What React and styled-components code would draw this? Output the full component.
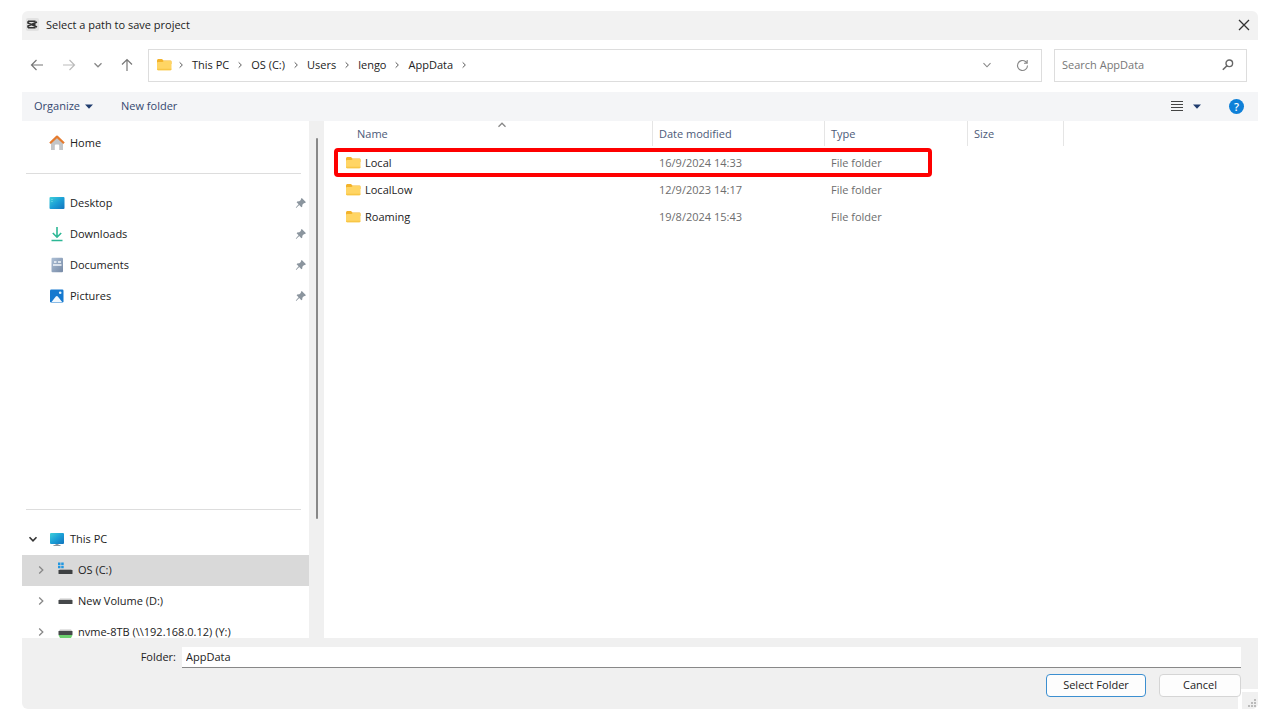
import styled, { createGlobalStyle } from "styled-components";

const places = [
  { name: "Desktop", icon: "desktop" },
  { name: "Downloads", icon: "downloads" },
  { name: "Documents", icon: "documents" },
  { name: "Pictures", icon: "pictures" },
];

const drives = [
  { name: "OS (C:)", icon: "system", selected: true },
  { name: "New Volume (D:)", icon: "drive" },
  { name: "nvme-8TB (\\\\192.168.0.12) (Y:)", icon: "network" },
];

const path = ["This PC", "OS (C:)", "Users", "lengo", "AppData"];

const folders = [
  { name: "Local", date: "16/9/2024 14:33", marked: true },
  { name: "LocalLow", date: "12/9/2023 14:17" },
  { name: "Roaming", date: "19/8/2024 15:43" },
];

const FolderIcon = () => (
  <svg width="15" height="14" viewBox="0 0 15 14">
    <path d="M0 2.5Q0 1 1.200 1H5L6.500 2.600H13.500Q14.500 2.600 14.500 3.800V6H0Z" fill="#f3b32b" />
    <path d="M0 5Q0 4 1 4H5.500L6.800 3H13.500Q14.500 3 14.500 4V11Q14.500 12.200 13.500 12.200H1Q0 12.200 0 11Z" fill="#ffd564" />
    <path d="M0 10.800H14.500Q14.500 12.200 13.500 12.200H1Q0 12.200 0 10.800Z" fill="#f8c646" />
  </svg>
);

const Chevron = ({ size = 6, color = "#555", turn = 0, weight = 1.3 }) => (
  <svg width={size} height={size} viewBox="0 0 8 8" overflow="visible">
    <path
      d="M2.200 0.500L5.800 4L2.200 7.500"
      transform={`rotate(${turn} 4 4)`}
      fill="none"
      stroke={color}
      strokeWidth={weight}
    />
  </svg>
);

const Arrow = ({ turn = 0, color = "#777" }) => (
  <svg width="14" height="14" viewBox="0 0 14 14">
    <path
      d="M13 7H1.500M6.500 2L1.500 7L6.500 12"
      transform={`rotate(${turn} 7 7)`}
      fill="none"
      stroke={color}
      strokeWidth="1.200"
    />
  </svg>
);

const Triangle = () => (
  <svg width="8" height="5" viewBox="0 0 8 5">
    <path d="M0 0.500H8L4 4.800Z" fill="#1f3c6e" />
  </svg>
);

const Pin = () => (
  <svg width="12" height="12" viewBox="0 0 12 12">
    <path
      d="M6.800 1L11 5.200L9.800 6L8.800 6.200L7.400 7.700L7.200 9.800L6.400 10.200L4.200 8L1.200 10.900L0.800 10.600L3.600 7.300L1.600 5.200L2.200 4.500L4.300 4.300L5.800 3L6 1.800Z"
      fill="#8b959e"
    />
  </svg>
);

const icons = {
  home: (
    <>
      <path d="M2 7L8 2.500L14 7V15H10.200V10.500Q10.200 9.500 9.200 9.500H6.800Q5.800 9.500 5.800 10.500V15H2Z" fill="#c3c5c8" />
      <path d="M1 8.200L8 1.600L15 8.200" fill="none" stroke="#e57b2e" strokeWidth="2.200" strokeLinejoin="round" />
    </>
  ),
  desktop: (
    <>
      <defs>
        <linearGradient id="desk" x1="0" y1="0" x2="1" y2="1">
          <stop offset="0" stopColor="#3fd0da" />
          <stop offset="0.5" stopColor="#1b9fd6" />
          <stop offset="1" stopColor="#1173bd" />
        </linearGradient>
      </defs>
      <rect x="0.500" y="2" width="15" height="12" rx="1" fill="url(#desk)" />
      <path d="M2.500 4.500H3.500M2.500 6.500H3.500" stroke="#7fe3ea" />
    </>
  ),
  downloads: (
    <path d="M8 1V11M3.800 7L8 11.200L12.200 7M2.500 14.500H13.500" fill="none" stroke="#2cb795" strokeWidth="1.600" />
  ),
  documents: (
    <>
      <defs>
        <linearGradient id="doc" x1="0" y1="0" x2="1" y2="1">
          <stop offset="0" stopColor="#adc0d6" />
          <stop offset="1" stopColor="#7689a5" />
        </linearGradient>
      </defs>
      <rect x="2.500" y="0.800" width="11.500" height="14.500" rx="1" fill="url(#doc)" />
      <path d="M5 5H7.500M9 5H12M4 8H12.500" stroke="#f4f8fc" strokeWidth="1.400" />
    </>
  ),
  pictures: (
    <>
      <rect x="1" y="1.500" width="13.500" height="13" rx="1.200" fill="#1579cf" />
      <path d="M2.500 14L6.800 8.500Q7.800 7.500 8.800 8.500L13.200 14Z" fill="#f1f8fe" />
      <circle cx="11.200" cy="4.800" r="1.300" fill="#e5f3fd" />
    </>
  ),
  pc: (
    <>
      <rect x="1" y="2" width="14" height="11" rx="1" fill="url(#desk)" />
      <path d="M6.500 13H9.500V14H11.500V15H4.500V14H6.500Z" fill="#8d98a1" />
    </>
  ),
  system: (
    <>
      <path d="M1 0.500H3.500V3H1ZM4.200 0.500H6.700V3H4.200ZM1 3.700H3.500V6.200H1ZM4.200 3.700H6.700V6.200H4.200Z" fill="#2397e0" />
      <path d="M3 7H14L15.500 8.500H1.500Z" fill="#aaa" />
      <rect x="1.500" y="8" width="14" height="4" rx="0.600" fill="#3d4042" />
    </>
  ),
  drive: (
    <>
      <path d="M3 5.500H14L15.500 7.500H1.500Z" fill="#c9c9c9" />
      <rect x="1.500" y="7" width="14" height="4" rx="0.600" fill="#45484a" />
    </>
  ),
  network: (
    <>
      <path d="M3 5.500H14L15.500 7.500H1.500Z" fill="#c9c9c9" />
      <rect x="1.500" y="7" width="14" height="4" rx="0.600" fill="#45484a" />
      <path d="M1.500 11H15.500L14 14H3Z" fill="#6cd06f" />
    </>
  ),
};

const ItemIcon = ({ name }) => (
  <svg width="16" height="16" viewBox="0 0 16 16">
    {icons[name]}
  </svg>
);

const App = () => {
  return (
    <>
      <GlobalStyle />
      <Dialog>
        <TitleBar>
          <svg width="13" height="13" viewBox="0 0 13 13">
            <rect width="13" height="13" rx="2" fill="#e2e2e2" />
            <path
              d="M2 3.300H9.500M2 9.700H9.500M2 3.300V5L11 9M2 9.700V8L11 4M4 6.500H9.500"
              fill="none"
              stroke="#333"
              strokeWidth="1.600"
            />
          </svg>
          <Title>Select a path to save project</Title>
          <IconButton aria-label="Close">
            <svg width="12" height="12" viewBox="0 0 12 12">
              <path d="M1 1L11 11M11 1L1 11" stroke="#333" strokeWidth="1.300" />
            </svg>
          </IconButton>
        </TitleBar>

        <NavBar>
          <NavButtons>
            <IconButton aria-label="Back">
              <Arrow />
            </IconButton>
            <IconButton aria-label="Forward">
              <Arrow turn={180} color="#bbb" />
            </IconButton>
            <IconButton aria-label="Recent locations">
              <Chevron size={8} turn={90} color="#888" />
            </IconButton>
            <IconButton aria-label="Up">
              <Arrow turn={90} />
            </IconButton>
          </NavButtons>
          <AddressBar>
            <PathRoot>
              <FolderIcon />
              <Chevron />
            </PathRoot>
            {path.map((part) => (
              <Crumb key={part}>
                <CrumbButton>{part}</CrumbButton>
                <Chevron />
              </Crumb>
            ))}
            <AddressTools>
              <IconButton aria-label="Previous locations">
                <Chevron size={8} turn={90} color="#888" weight={1.1} />
              </IconButton>
              <IconButton aria-label="Refresh">
                <svg width="13" height="13" viewBox="0 0 13 13">
                  <path
                    d="M11.500 6.500A5 5 0 1 1 9.500 2.500L11 4M11.200 1V4.200H8"
                    fill="none"
                    stroke="#888"
                    strokeWidth="1.100"
                  />
                </svg>
              </IconButton>
            </AddressTools>
          </AddressBar>
          <SearchBox>
            <SearchInput aria-label="Search AppData" placeholder="Search AppData" />
            <svg width="12" height="12" viewBox="0 0 12 12">
              <circle cx="7.300" cy="4.300" r="3.300" fill="none" stroke="#666" strokeWidth="1.400" />
              <path d="M5 6.700L0.800 10.800" stroke="#666" strokeWidth="1.600" />
            </svg>
          </SearchBox>
        </NavBar>

        <Toolbar>
          <ToolButton>
            Organize <Triangle />
          </ToolButton>
          <ToolButton>New folder</ToolButton>
          <ViewTools>
            <IconButton aria-label="View">
              <svg width="12" height="12" viewBox="0 0 12 12">
                <path d="M0 1.500H12M0 4.500H12M0 7.500H12M0 10.500H12" stroke="#444" strokeWidth="1.200" />
              </svg>
            </IconButton>
            <IconButton aria-label="More views">
              <Triangle />
            </IconButton>
            <HelpButton aria-label="Help">?</HelpButton>
          </ViewTools>
        </Toolbar>

        <Body>
          <Sidebar>
            <SideItem>
              <ItemIcon name="home" />
              Home
            </SideItem>
            <Divider />
            {places.map((place) => (
              <SideItem key={place.name}>
                <ItemIcon name={place.icon} />
                <SideLabel>{place.name}</SideLabel>
                <Pin />
              </SideItem>
            ))}
            <Tree>
              <Divider />
              <TreeItem>
                <Chevron size={8} turn={90} color="#333" weight={1.6} />
                <ItemIcon name="pc" />
                This PC
              </TreeItem>
              {drives.map((drive) => (
                <TreeItem key={drive.name} $nested $selected={drive.selected}>
                  <Chevron size={8} color="#888" />
                  <ItemIcon name={drive.icon} />
                  {drive.name}
                </TreeItem>
              ))}
            </Tree>
          </Sidebar>
          <ScrollTrack>
            <ScrollThumb />
          </ScrollTrack>
          <FileList>
            <Table>
              <thead>
                <tr>
                  <HeadCell $width={329} $first>
                    Name
                    <SortMark>
                      <Chevron size={8} turn={-90} color="#888" />
                    </SortMark>
                  </HeadCell>
                  <HeadCell $width={172}>Date modified</HeadCell>
                  <HeadCell $width={143}>Type</HeadCell>
                  <HeadCell $width={96}>Size</HeadCell>
                </tr>
              </thead>
              <tbody>
                {folders.map((folder) => (
                  <Row key={folder.name} $marked={folder.marked}>
                    <Cell>
                      <FileName>
                        <FolderIcon />
                        {folder.name}
                      </FileName>
                    </Cell>
                    <Cell>{folder.date}</Cell>
                    <Cell>File folder</Cell>
                    <Cell />
                  </Row>
                ))}
              </tbody>
            </Table>
          </FileList>
        </Body>

        <Footer>
          <Field>
            <FieldLabel htmlFor="folder">Folder:</FieldLabel>
            <FieldInput id="folder" defaultValue="AppData" />
          </Field>
          <Actions>
            <ActionButton $primary>Select Folder</ActionButton>
            <ActionButton>Cancel</ActionButton>
          </Actions>
          <Grip>
            <svg width="9" height="9" viewBox="0 0 9 9">
              <path d="M6 0H8V2H6ZM6 3H8V5H6ZM6 6H8V8H6ZM3 3H5V5H3ZM3 6H5V8H3ZM0 6H2V8H0Z" fill="#bbb" />
            </svg>
          </Grip>
        </Footer>
      </Dialog>
    </>
  );
};

const GlobalStyle = createGlobalStyle`
  *,
  *::after {
    box-sizing: border-box;
  }

  body {
    margin: 0;
    background: #fff;
    color: #222;
    font-family: "Open Sans", "Noto Sans", sans-serif;
    font-size: 11px;
    line-height: 16px;
  }

  button,
  input {
    font: inherit;
    color: inherit;
  }

  svg {
    display: block;
    flex-shrink: 0;
  }
`;

const Dialog = styled.main`
  display: flex;
  flex-direction: column;
  height: calc(100vh - 22px);
  margin: 11px 22px;
  border-radius: 6px;
  overflow: hidden;
`;

const TitleBar = styled.header`
  display: flex;
  align-items: center;
  gap: 7px;
  height: 29px;
  padding: 0 8px 2px 4px;
  background: #f2f2f2;
`;

const Title = styled.h1`
  flex: 1;
  margin: 0;
  font-size: 11px;
  font-weight: 400;
`;

const IconButton = styled.button`
  display: flex;
  padding: 0;
  border: none;
  background: none;
`;

const NavBar = styled.div`
  display: flex;
  align-items: center;
  height: 52px;
  padding: 0 11px 2px 8px;
`;

const NavButtons = styled.div`
  display: flex;
  align-items: center;
  justify-content: space-between;
  width: 104px;
  margin-right: 14px;
`;

const AddressBar = styled.nav`
  display: flex;
  align-items: center;
  flex: 1;
  gap: 8px;
  height: 33px;
  padding: 0 12px 0 8px;
  border: 1px solid #ddd;
`;

const PathRoot = styled.div`
  display: flex;
  align-items: center;
  gap: 6px;
`;

const Crumb = styled.div`
  display: flex;
  align-items: center;
  gap: 8px;
`;

const CrumbButton = styled.button`
  padding: 0;
  border: none;
  background: none;
`;

const AddressTools = styled.div`
  display: flex;
  align-items: center;
  gap: 25px;
  margin-left: auto;
`;

const SearchBox = styled.div`
  display: flex;
  align-items: center;
  width: 193px;
  height: 33px;
  margin-left: 12px;
  padding: 0 12px 0 7px;
  border: 1px solid #ddd;
`;

const SearchInput = styled.input`
  flex: 1;
  min-width: 0;
  padding: 0;
  border: none;
  outline: none;

  &::placeholder {
    color: #777;
    opacity: 1;
  }
`;

const Toolbar = styled.div`
  display: flex;
  align-items: center;
  gap: 28px;
  height: 29px;
  padding: 0 14px 1px 12px;
  background: #f4f5f7;
`;

const ToolButton = styled.button`
  display: flex;
  align-items: center;
  gap: 5px;
  padding: 0;
  border: none;
  background: none;
  color: #35486f;
`;

const ViewTools = styled.div`
  display: flex;
  align-items: center;
  gap: 10px;
  margin-left: auto;
`;

const HelpButton = styled.button`
  width: 15px;
  height: 15px;
  margin-left: 18px;
  padding: 0;
  border: none;
  border-radius: 50%;
  background: #0f80d8;
  color: #fff;
  font-weight: 600;
  line-height: 15px;
`;

const Body = styled.div`
  display: flex;
  flex: 1;
  min-height: 0;
`;

const Sidebar = styled.aside`
  width: 287px;
  padding-top: 7px;
  overflow: hidden;
`;

const SideItem = styled.div`
  display: flex;
  align-items: center;
  gap: 5px;
  height: 31px;
  padding: 0 2px 2px 27px;
  background: ${(props) => (props.$selected ? "#d9d9d9" : "none")};
`;

const TreeItem = styled(SideItem)`
  padding-left: ${(props) => (props.$nested ? 15 : 7)}px;

  svg:first-child {
    margin-right: 7px;
  }
`;

const SideLabel = styled.span`
  flex: 1;
`;

const Divider = styled.hr`
  height: 1px;
  margin: 14px 8px 14px 4px;
  border: none;
  background: #ddd;
`;

const Tree = styled.div`
  padding-top: 183px;
`;

const ScrollTrack = styled.div`
  display: flex;
  justify-content: center;
  width: 15px;
  padding: 17px 0 119px;
  background: #f0f0f0;
`;

const ScrollThumb = styled.div`
  width: 2px;
  border-radius: 1px;
  background: #888;
`;

const FileList = styled.section`
  flex: 1;
  min-width: 0;
`;

const Table = styled.table`
  border-collapse: separate;
  border-spacing: 0;
  table-layout: fixed;
  width: 740px;

  thead::after {
    content: "";
    display: block;
    height: 3px;
  }
`;

const HeadCell = styled.th`
  position: relative;
  width: ${(props) => props.$width}px;
  height: 25px;
  padding: 0 0 0 ${(props) => (props.$first ? 33 : 6)}px;
  border-right: 1px solid #e5e5e5;
  color: #4c5a78;
  font-weight: 400;
  text-align: left;
`;

const SortMark = styled.span`
  position: absolute;
  top: 0;
  left: 174px;
`;

const Row = styled.tr`
  position: relative;

  ${(props) =>
    props.$marked &&
    `
    &::after {
      content: "";
      position: absolute;
      top: -1px;
      bottom: -1px;
      left: 10px;
      width: 598px;
      border: 4px solid #fe0000;
      border-radius: 4px;
    }
  `}
`;

const Cell = styled.td`
  height: 27px;
  padding: 0 0 0 6px;
  color: #6d6d6d;

  &:first-child {
    padding-left: 22px;
    color: #222;
  }
`;

const FileName = styled.div`
  display: flex;
  align-items: center;
  gap: 4px;
`;

const Footer = styled.footer`
  position: relative;
  height: 71px;
  padding: 9px 17px 0 0;
  background: #f0f0f0;
`;

const Field = styled.div`
  display: flex;
  align-items: center;
`;

const FieldLabel = styled.label`
  width: 160px;
  padding: 0 6px 2px 0;
  text-align: right;
`;

const FieldInput = styled.input`
  flex: 1;
  height: 21px;
  padding: 0 4px 2px;
  border: none;
  border-bottom: 1px solid #888;
  outline: none;
  background: #fff;
`;

const Actions = styled.div`
  position: relative;
  z-index: 1;
  display: flex;
  justify-content: flex-end;
  gap: 13px;
  margin-top: 6px;
`;

const ActionButton = styled.button`
  width: ${(props) => (props.$primary ? 100 : 82)}px;
  height: 23px;
  padding: 0 0 2px;
  border: 1px solid ${(props) => (props.$primary ? "#3c8fd0" : "#d5d5d5")};
  border-radius: 4px;
  background: #fdfdfd;
`;

const Grip = styled.div`
  position: absolute;
  right: 0;
  bottom: 0;
  display: flex;
  align-items: flex-end;
  justify-content: flex-end;
  width: 20px;
  height: 20px;
  padding: 0 1px 1px 0;
  border-top: 3px solid #fff;
  border-left: 4px solid #fff;
  background: #f0f0f0;
`;

export default App;
